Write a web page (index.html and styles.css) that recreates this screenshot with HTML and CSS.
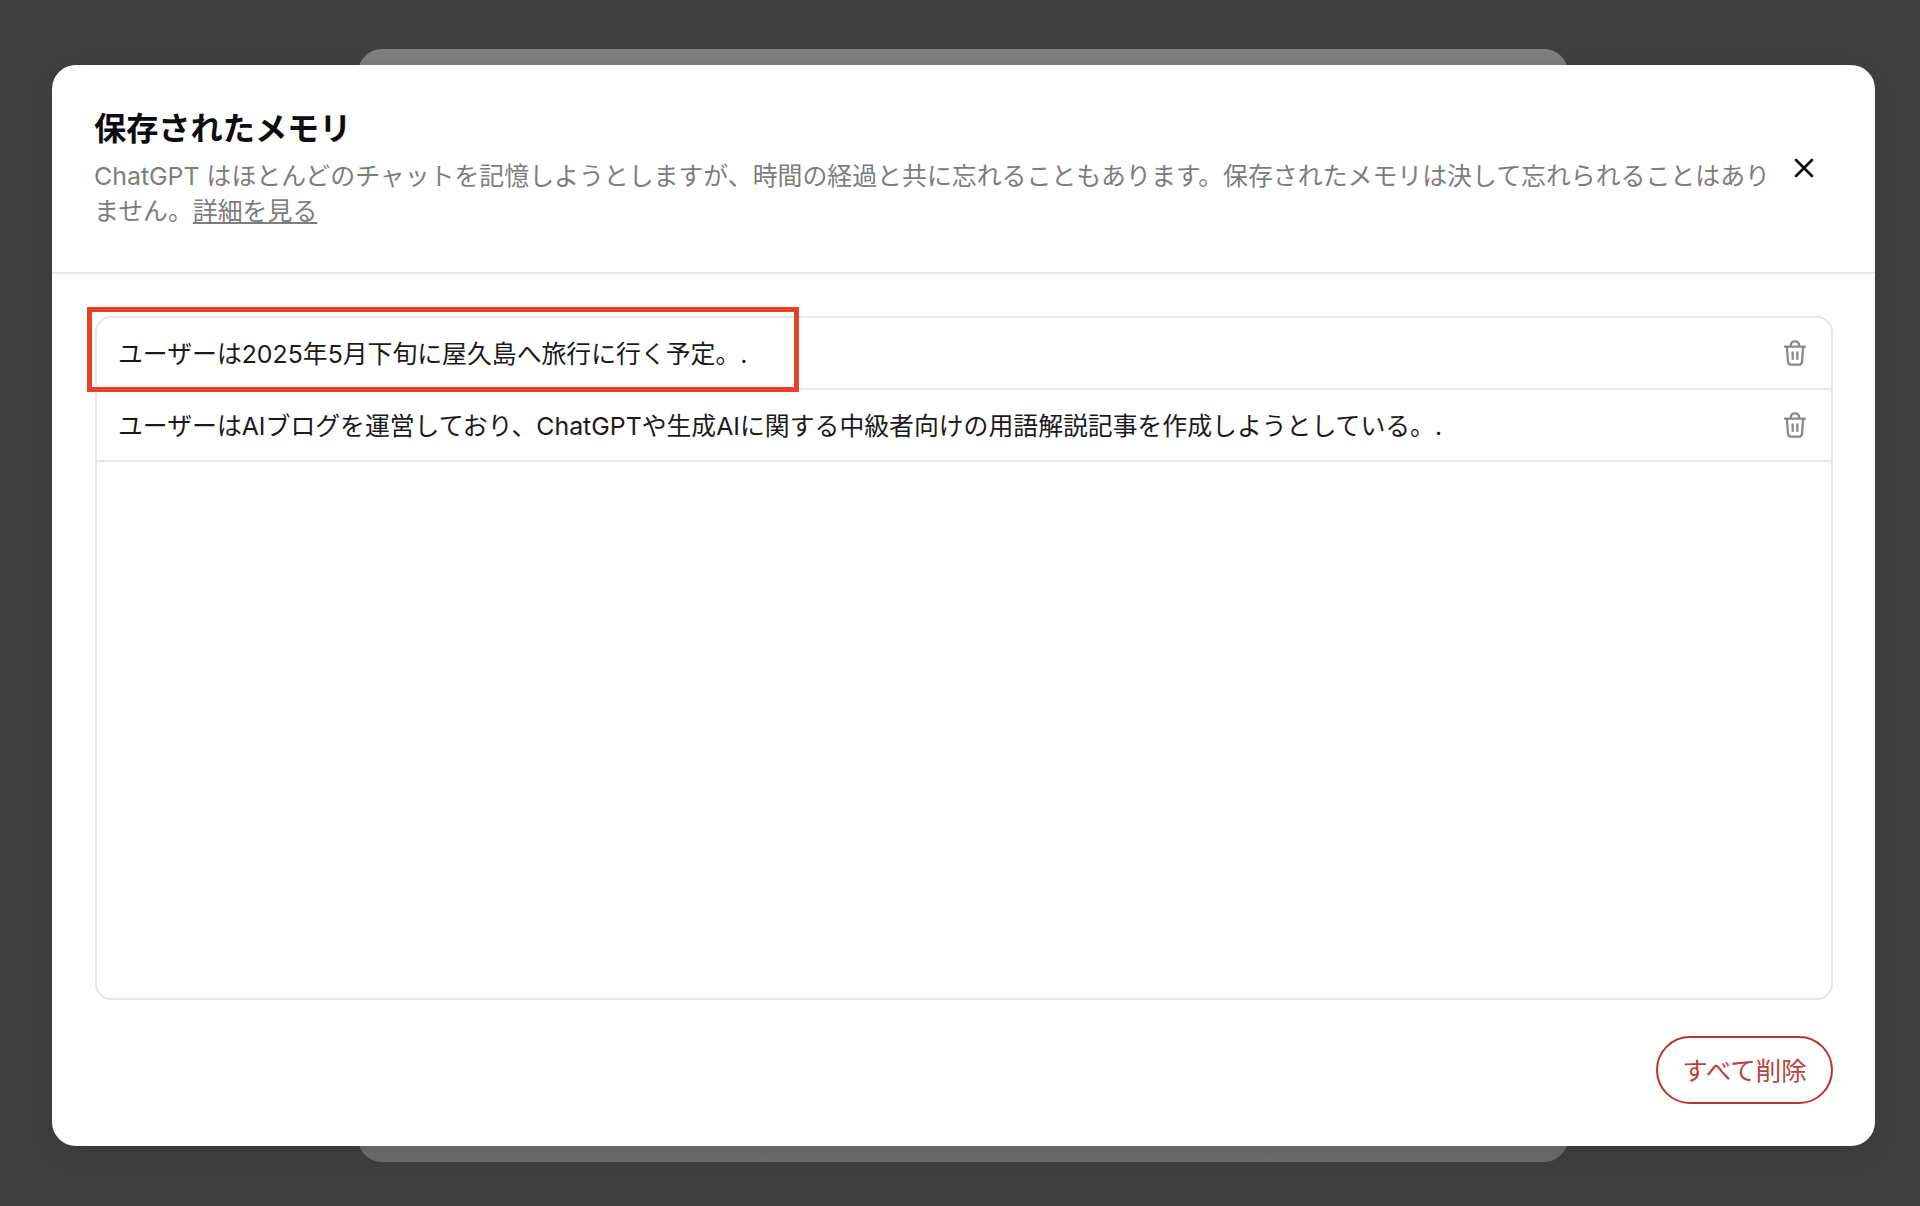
FILE: index.html
```html
<!DOCTYPE html>
<html lang="ja">
<head>
<meta charset="utf-8">
<title>保存されたメモリ</title>
<link rel="stylesheet" href="styles.css">
</head>
<body>
<div class="backdrop">
  <div class="back-panel"></div>
  <section class="modal">
    <header class="modal-head">
      <div class="head-text">
        <h1 class="title">保存されたメモリ</h1>
        <p class="desc">ChatGPT はほとんどのチャットを記憶しようとしますが、時間の経過と共に忘れることもあります。保存されたメモリは決して忘れられることはあり<br>ません。<a class="link" href="#">詳細を見る</a></p>
      </div>
      <button class="close" aria-label="閉じる">
        <svg viewBox="0 0 20 20" width="20" height="20"><path d="M2 2 18 18M18 2 2 18" fill="none" stroke="#0d0d0d" stroke-width="2.6" stroke-linecap="round"/></svg>
      </button>
    </header>
    <div class="modal-body">
      <ul class="list">
        <li class="row">
          <span class="row-text">ユーザーは2025年5月下旬に屋久島へ旅行に行く予定。.</span>
          <svg class="trash" viewBox="0 0 24 24" width="28" height="28"><path d="M3.500 6.500h17M8.500 6.500V5a3 3 0 0 1 3-3h1a3 3 0 0 1 3 3v1.500M5 6.500l1 13a2.600 2.600 0 0 0 2.600 2.400h6.800A2.600 2.600 0 0 0 18 19.500l1-13M10 11.500v5.500M14 11.500v5.500"/></svg>
        </li>
        <li class="row">
          <span class="row-text">ユーザーはAIブログを運営しており、ChatGPTや生成AIに関する中級者向けの用語解説記事を作成しようとしている。.</span>
          <svg class="trash" viewBox="0 0 24 24" width="28" height="28"><path d="M3.500 6.500h17M8.500 6.500V5a3 3 0 0 1 3-3h1a3 3 0 0 1 3 3v1.500M5 6.500l1 13a2.600 2.600 0 0 0 2.600 2.400h6.800A2.600 2.600 0 0 0 18 19.500l1-13M10 11.500v5.500M14 11.500v5.500"/></svg>
        </li>
      </ul>
      <div class="actions">
        <button class="danger">すべて削除</button>
      </div>
    </div>
    <div class="callout"></div>
  </section>
</div>
</body>
</html>
```
FILE: styles.css
```css
* { box-sizing: border-box; }
html, body { margin: 0; height: 100%; }
body {
  font-family: Inter, "Noto Sans CJK JP", sans-serif;
  background: #414141;
  color: #0d0d0d;
}
.backdrop {
  position: relative;
  height: 1206px;
  padding: 65px 45px 60px 52px;
  overflow: hidden;
}
.back-panel {
  position: absolute;
  left: 358px;
  top: 49px;
  width: 1210px;
  height: 1113px;
  border-radius: 24px;
  background: linear-gradient(#828282, #6f6f6f);
}
.modal {
  position: relative;
  height: 1081px;
  background: #fff;
  border-radius: 24px;
  display: flex;
  flex-direction: column;
  box-shadow: 0 8px 40px rgba(0, 0, 0, .15);
}
.modal-head {
  height: 209px;
  flex: none;
  padding: 43px 61px 0 42px;
  display: flex;
  align-items: flex-start;
  justify-content: space-between;
  border-bottom: 2px solid #e7e7e7;
}
.title {
  margin: 0;
  font-size: 32.200px;
  line-height: 42px;
  font-weight: 700;
}
.desc {
  margin: 9px 0 0;
  font-size: 24.900px;
  line-height: 35px;
  color: #7d7d7d;
  white-space: nowrap;
}
.link { color: inherit; text-decoration: underline; }
.close {
  border: 0;
  background: none;
  padding: 0;
  margin: 50px 0 0 0;
  width: 20px;
  height: 20px;
  display: block;
}
.close svg { display: block; }
.modal-body {
  flex: 1;
  padding: 42px 42px 43px 43px;
  display: flex;
  flex-direction: column;
}
.list {
  list-style: none;
  margin: 0;
  padding: 0;
  height: 684px;
  border: 2px solid #e7e7e7;
  border-radius: 16px;
}
.row {
  height: 72px;
  padding: 0 22px 0 21px;
  display: flex;
  align-items: center;
  justify-content: space-between;
  border-bottom: 2px solid #e7e7e7;
  font-size: 24.850px;
  color: #1a1a1a;
}
.row-text { margin-top: -3px; }
.trash {
  fill: none;
  stroke: #8a8a8a;
  stroke-width: 2;
  stroke-linecap: round;
  stroke-linejoin: round;
}
.actions {
  margin-top: 36px;
  display: flex;
  justify-content: flex-end;
}
.danger {
  width: 177px;
  height: 68px;
  padding: 0 0 3px;
  border: 2px solid #b9352b;
  border-radius: 34px;
  background: #fff;
  color: #b9443b;
  font: inherit;
  font-size: 25.500px;
}
.callout {
  position: absolute;
  left: 35px;
  top: 242px;
  width: 712px;
  height: 85px;
  border: 5px solid #e8432a;
  pointer-events: none;
}
```
